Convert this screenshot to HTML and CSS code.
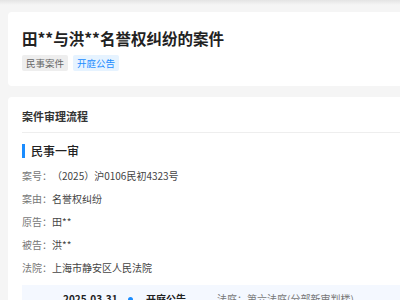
FILE: index.html
```html
<!DOCTYPE html>
<html lang="zh-CN">
<head>
    <meta charset="UTF-8">
    <meta name="viewport" content="width=device-width, initial-scale=1.0">
    <title>案件详情</title>
    <link rel="stylesheet" href="styles.css">
</head>
<body>

    <div class="top-shadow"></div>

    <div class="page">
        <div class="card head-card">
            <h1 class="case-title">田**与洪**名誉权纠纷的案件</h1>
            <div class="tags">
                <span class="tag tag-gray">民事案件</span>
                <span class="tag tag-blue">开庭公告</span>
            </div>
        </div>

        <div class="card flow-card">
            <h2 class="card-title">案件审理流程</h2>
            <div class="stage">
                <h3 class="stage-title">民事一审</h3>
                <div class="info-row"><span class="label">案号：</span><span class="value">（2025）沪0106民初4323号</span></div>
                <div class="info-row"><span class="label">案由：</span><span class="value">名誉权纠纷</span></div>
                <div class="info-row"><span class="label">原告：</span><span class="value">田**</span></div>
                <div class="info-row"><span class="label">被告：</span><span class="value">洪**</span></div>
                <div class="info-row"><span class="label">法院：</span><span class="value">上海市静安区人民法院</span></div>

                <div class="timeline">
                    <div class="event">
                        <span class="event-date">2025-03-31</span>
                        <span class="event-dot"></span>
                        <span class="event-name">开庭公告</span>
                        <span class="event-info">法庭：第六法庭(分部新审判楼)</span>
                    </div>
                </div>
            </div>
        </div>
    </div>

</body>
</html>
```

FILE: styles.css
```css
body {
    margin: 0;
    background: #f5f5f5;
    font-family: "Noto Sans CJK SC", "Noto Sans", sans-serif;
    color: #333;
    overflow: hidden;
    text-spacing-trim: space-all;
}
.top-shadow {
    height: 5px;
    background: linear-gradient(to bottom, #e4e4e4, #f5f5f5);
}
.page {
    width: 460px;
    padding: 7px 0 0 8px;
}
.card {
    background: #fff;
    border-radius: 4px;
    margin-bottom: 11px;
}
.head-card {
    padding: 14px 14px 15px;
}
.case-title {
    margin: 0;
    font-size: 15.5px;
    line-height: 24px;
    font-weight: bold;
    color: #222;
}
.tags {
    display: flex;
    gap: 5px;
    margin-top: 5px;
}
.tag {
    font-size: 9.5px;
    line-height: 16px;
    padding: 0 4px;
    border-radius: 2px;
}
.tag-gray {
    background: #eeeeee;
    color: #666;
}
.tag-blue {
    background: #e6f3ff;
    color: #1a8cff;
}
.flow-card {
    padding: 0 0 0 14px;
}
.card-title {
    margin: 0;
    font-size: 11px;
    line-height: 16px;
    font-weight: bold;
    color: #333;
    padding: 11px 0 8px;
    border-bottom: 1px solid #eeeeee;
}
.stage {
    padding-top: 11px;
}
.stage-title {
    margin: 0 0 6px;
    font-size: 12px;
    line-height: 14px;
    font-weight: 500;
    color: #222;
    border-left: 3px solid #1a8cff;
    padding-left: 6px;
}
.info-row {
    font-size: 10px;
    line-height: 23px;
}
.label {
    color: #777;
}
.value {
    color: #444;
}
.timeline {
    margin-top: 6px;
    background: #f4f8ff;
    padding: 6px 0 6px 41px;
}
.event {
    display: flex;
    align-items: center;
    font-size: 10px;
    line-height: 16px;
}
.event-date {
    font-weight: bold;
    color: #222;
    width: 65px;
}
.event-dot {
    width: 5px;
    height: 5px;
    border-radius: 50%;
    background: #1a8cff;
    margin-right: 13px;
}
.event-name {
    font-weight: bold;
    color: #222;
    width: 71px;
}
.event-info {
    color: #777;
}
```
